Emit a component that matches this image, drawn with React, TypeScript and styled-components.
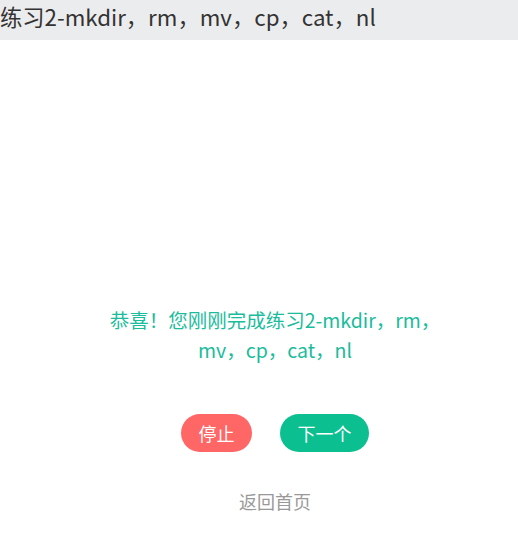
import styled, { createGlobalStyle } from 'styled-components'

const GlobalStyle = createGlobalStyle`
    html, body {
        margin: 0;
        padding: 0;
        background: #ffffff;
        font-family: "Noto Sans CJK SC", sans-serif;
        text-spacing-trim: space-all;
    }
`

function App() {
    return (
        <Page>
            <GlobalStyle />
            <Header>
                <Title>练习2-mkdir，rm，mv，cp，cat，nl</Title>
            </Header>
            <Content>
                <Message>
                    恭喜！您刚刚完成练习2-mkdir，rm，mv，cp，cat，nl
                </Message>
                <ButtonsGroup>
                    <Button $color="#ff6666">停止</Button>
                    <Button $color="#0bbf91">下一个</Button>
                </ButtonsGroup>
                <BackLink>返回首页</BackLink>
            </Content>
        </Page>
    )
}

const Page = styled.div`
    width: 518px;
    min-height: 534px;
    overflow: hidden;
`

const Header = styled.div`
    height: 40px;
    background: #ebeced;
    display: flex;
    align-items: center;
`

const Title = styled.h1`
    margin: 0;
    margin-top: -9px;
    font-size: 22.3px;
    line-height: 30px;
    font-weight: normal;
    color: #333333;
    white-space: nowrap;
`

const Content = styled.div`
    display: flex;
    flex-direction: column;
    align-items: center;
    padding-top: 265px;
    padding-left: 32px;
`

const Message = styled.p`
    margin: 0;
    width: 372px;
    text-align: center;
    color: #1abc9c;
    font-size: 19.5px;
    line-height: 30px;
`

const ButtonsGroup = styled.div`
    display: flex;
    gap: 28px;
    margin-top: 49px;
`

interface IButtonProps {
    $color: string;
}

const Button = styled.div<IButtonProps>`
    cursor: pointer;
    height: 38px;
    padding: 0 17.5px;
    border-radius: 19px;
    background: ${props => props.$color};
    color: white;
    font-size: 18px;
    display: flex;
    align-items: center;
    justify-content: center;
`

const BackLink = styled.a`
    margin-top: 36px;
    color: #999999;
    font-size: 18px;
    cursor: pointer;
`

export default App
